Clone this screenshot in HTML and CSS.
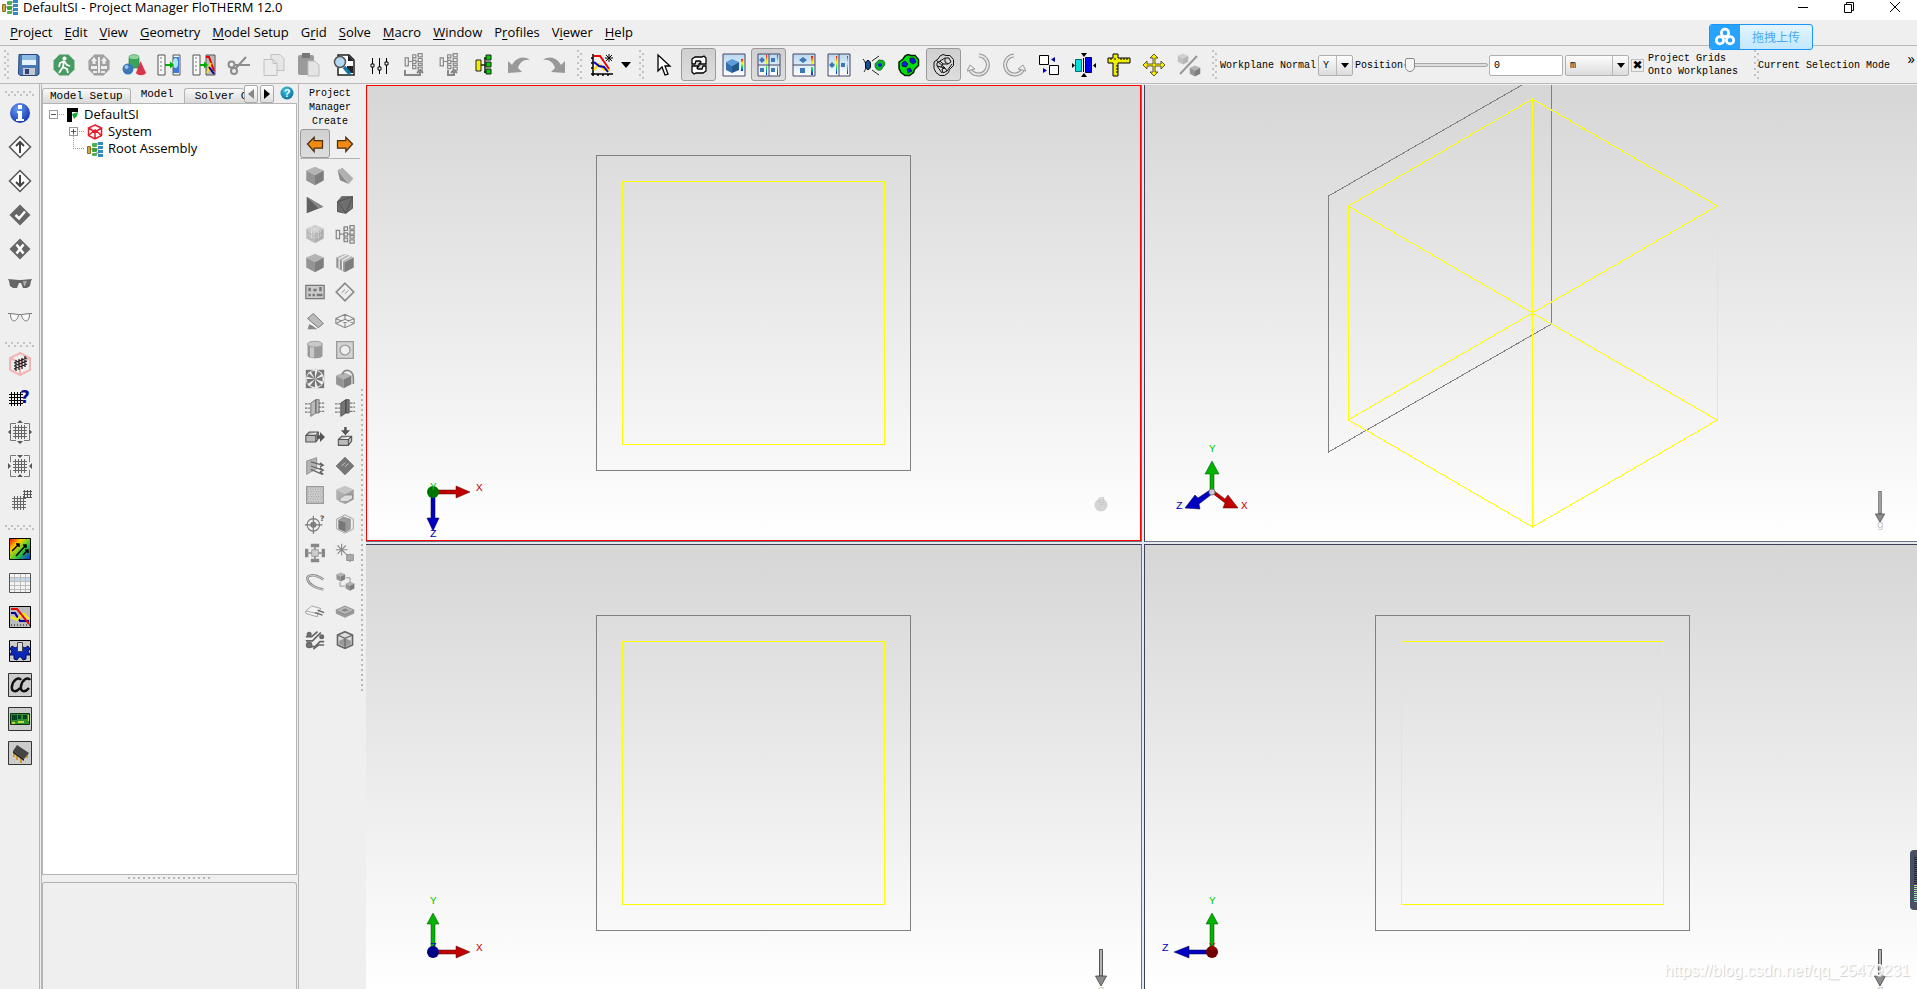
FILE: index.html
```html
<!DOCTYPE html>
<html lang="en">
<head>
<meta charset="utf-8">
<title>DefaultSI - Project Manager FloTHERM 12.0</title>
<link rel="stylesheet" href="styles.css">
</head>
<body>
<svg class="defs" aria-hidden="true">
  <defs>
    <linearGradient id="rain" x1="0" y1="0" x2="0" y2="1"><stop offset="0" stop-color="#f00"/><stop offset=".35" stop-color="#ff0"/><stop offset=".6" stop-color="#2e4"/><stop offset="1" stop-color="#02f"/></linearGradient>
    <linearGradient id="rain2" x1="0" y1="0" x2="1" y2="1"><stop offset="0" stop-color="#f00"/><stop offset=".3" stop-color="#fc0"/><stop offset=".6" stop-color="#3c3"/><stop offset="1" stop-color="#02f"/></linearGradient>
    <linearGradient id="sky" x1="0" y1="0" x2="0" y2="1"><stop offset="0" stop-color="#b8d8ee"/><stop offset="1" stop-color="#fff"/></linearGradient>
    <radialGradient id="ball" cx=".4" cy=".3" r=".8"><stop offset="0" stop-color="#6a9cf4"/><stop offset="1" stop-color="#0a2ca8"/></radialGradient>
    <radialGradient id="teal" cx=".4" cy=".3" r=".8"><stop offset="0" stop-color="#3ec4e4"/><stop offset="1" stop-color="#04688e"/></radialGradient>
    <symbol id="cube" viewBox="0 0 24 24"><path fill="#b4b4b4" d="M12 1l10.500 4.500L12 11 1.500 5.500z"/><path fill="#949494" d="M1.500 5.500L12 11v12L1.500 17.500z"/><path fill="#7e7e7e" d="M22.500 5.500L12 11v12l10.500-5.500z"/></symbol>
    <symbol id="tree" viewBox="0 0 24 24"><g fill="none" stroke="currentColor" stroke-width="1.500"><path d="M6 12h5M13 5h-2v14h2M13 12h4M17 4h2M17 12h2M17 20h2"/><path fill="#eee" d="M1.500 7.500h4v10h-4zM11 3.500h4v4h-4zM11 10.500h4v4h-4zM11 17h4v4h-4zM18 2h5v4h-5zM18 8h5v4h-5zM18 14h5v3h-5zM18 19h5v4h-5z"/></g></symbol>
    <symbol id="ctree" viewBox="0 0 16 16"><path stroke="#777" fill="none" d="M4 8h3M9 3h3M9 12h3M9 8h3"/><path fill="#caa84c" stroke="#8c6c20" d="M.5 5.500h3v7h-3z"/><rect x="5" y="2" width="5" height="4" rx="1" fill="#4db24d"/><rect x="5" y="7" width="5" height="4" rx="1" fill="#3da23d"/><rect x="5" y="12" width="5" height="3" rx="1" fill="#4db24d"/><path fill="#3488c4" d="M11 1h5v3h-5zM11 5h5v3h-5zM11 9h5v3h-5zM11 13h5v3h-5z"/></symbol>
    <symbol id="grid" viewBox="0 0 14 14"><path fill="none" stroke="currentColor" stroke-width="1" d="M2.500 0v14M5.500 0v14M8.500 0v14M11.500 0v14M0 2.500h14M0 5.500h14M0 8.500h14M0 11.500h14"/></symbol>
    <symbol id="dia" viewBox="0 0 24 24"><path d="M12 1.500L22.500 12 12 22.500 1.500 12z"/></symbol>
    <symbol id="mole" viewBox="0 0 24 24"><path d="M8 3l3-1.500 3 1 4 0 3.500 4v6l-4 4-1 3-4 3H8l-4-3-2-4V9l4-3z"/></symbol>
    <symbol id="garrow" viewBox="0 0 12 40"><path stroke="#555" fill="#b4b4b4" d="M4.500 .5h3V27h-3z"/><path fill="#8c8c8c" stroke="#444" stroke-width=".8" d="M.5 27h11L6 37z"/></symbol>
  </defs>
</svg>

<header class="title">
  <svg class="i16"><use href="#ctree"/></svg>
  <h1>DefaultSI - Project Manager FloTHERM 12.0</h1>
  <div class="winbtns">
    <button aria-label="Minimize"><svg viewBox="0 0 12 12"><path stroke="#000" d="M1 6.500h10"/></svg></button>
    <button aria-label="Restore"><svg viewBox="0 0 12 12" fill="none" stroke="#000"><path d="M1.500 3.500h7v8h-7zM3.500 3V1.500h7v8H9"/></svg></button>
    <button aria-label="Close"><svg viewBox="0 0 12 12"><path stroke="#000" d="M1 1l10 10M11 1L1 11"/></svg></button>
  </div>
</header>

<nav class="menu">
  <button><u>P</u>roject</button><button><u>E</u>dit</button><button><u>V</u>iew</button><button><u>G</u>eometry</button><button><u>M</u>odel Setup</button><button>G<u>r</u>id</button><button><u>S</u>olve</button><button><u>M</u>acro</button><button><u>W</u>indow</button><button>P<u>r</u>ofiles</button><button>V<u>i</u>ewer</button><button><u>H</u>elp</button>
  <button class="upload"><span class="logo"><svg viewBox="0 0 24 24" fill="none" stroke="#fff" stroke-width="3"><circle cx="12" cy="7.500" r="4"/><circle cx="6.500" cy="15.500" r="4"/><circle cx="17.500" cy="15.500" r="4"/></svg></span><span class="uptext">拖拽上传</span></button>
</nav>

<div class="toolbar">
  <span class="grip"></span>
  <div class="group">
    <button aria-label="Save"><svg viewBox="0 0 24 24"><path fill="#4a78b4" stroke="#2b4474" d="M2 1.500h18l2 1.500v18l-2 1.500H3L1.500 21z"/><path fill="#e8f2fa" d="M5 2h14v10H5z"/><path fill="#8cbce4" d="M5 2h14v5H5z"/><path fill="#c4c8d0" d="M6 15h12v7H6z"/><path fill="#2b4474" d="M8 16h4v5H8z"/></svg></button>
    <button aria-label="Run"><svg viewBox="0 0 24 24"><path fill="#4a9a64" stroke="#9ccaa8" d="M7.500 1.500h9l6 6v9l-6 6h-9l-6-6v-9z"/><circle cx="12.500" cy="5.500" r="2" fill="#fff"/><path fill="none" stroke="#fff" stroke-width="1.800" d="M12 8l-1 6-4 6M11 14l4 2 1 4M12 8l-4 2-1 4M12 8l3 4 3 1"/></svg></button>
    <button aria-label="Stop"><svg viewBox="0 0 24 24"><path fill="#a0a0a0" stroke="#c4c4c4" d="M7.500 1.500h9l6 6v9l-6 6h-9l-6-6v-9z"/><path fill="#eee" d="M7 4l3 4H8.500v3h-3V8H4zM17 4l3 4h-1.500v3h-3V8H14zM4 13h6v3H4zM14 13h6v3h-6zM11 4h2v16h-2zM6 18h4v2H6zM14 18h4v2h-4z"/></svg></button>
    <button aria-label="Geometry"><svg viewBox="0 0 24 24"><path fill="#3ba45c" stroke="#1f7a3c" stroke-width=".6" d="M7 4c0-3 10-3 10 0v11H7z"/><ellipse cx="12" cy="4" rx="5" ry="2" fill="#8fd4a0"/><circle cx="6" cy="16" r="5.500" fill="#3b78b8"/><circle cx="4.500" cy="14" r="2" fill="#a0c4e8"/><path fill="#d8344c" d="M18.500 8L24 20c-2 3-8 3-10 0z"/></svg></button>
    <button aria-label="Translate"><svg viewBox="0 0 24 24"><path fill="#f8f8f8" stroke="#555" d="M1 2h7v20H1zM16 2h7v20h-7z"/><path stroke="#777" d="M3 5h2M3 9h2M3 13h2M3 17h2"/><path fill="#3c78d8" d="M16 4h6v16h-6z"/><ellipse cx="18.500" cy="10" rx="2.500" ry="5" fill="#a8e8f0"/><path fill="#0a0" d="M8 11h5V8.500l4 3.500-4 3.500V13H8z"/></svg></button>
    <button aria-label="Results"><svg viewBox="0 0 24 24"><path fill="#f8f8f8" stroke="#555" d="M1 2h7v20H1z"/><path fill="#bbb" stroke="#555" d="M14 2h9v20h-9z"/><path stroke="#777" d="M3 5h2M3 9h2M3 13h2M3 17h2"/><path fill="none" stroke="#e00" stroke-width="2" d="M14 4h3l5 14"/><path fill="none" stroke="#fd0" stroke-width="2" d="M15 20l4-10"/><path stroke="#00a" stroke-width="2" d="M17 14l5 7"/><path fill="#0a0" d="M8 11h4V8.500l4 3.500-4 3.500V13H8z"/></svg></button>
    <button aria-label="Cut"><svg viewBox="0 0 24 24" fill="none" stroke="#8c8c8c" stroke-width="2"><path d="M9 15L19 4M8 12h15"/><circle cx="4.500" cy="11.500" r="3"/><circle cx="7" cy="18" r="3"/></svg></button>
    <button aria-label="Copy"><svg viewBox="0 0 24 24" fill="#e6e6e6" stroke="#c0c0c0"><path d="M9 1.500h9l4 4v12H9z"/><path fill="#ececec" d="M2 6.500h9l4 4v12H2z"/><path fill="none" d="M11 6.500v4h4"/></svg></button>
    <button aria-label="Paste"><svg viewBox="0 0 24 24"><rect x="1" y="2" width="16" height="20" rx="2" fill="#9a9a9a"/><path fill="#777" d="M5 0h8v5H5z"/><path fill="#e4e4e4" stroke="#bbb" d="M11 8h7l4 4v11H11z"/></svg></button>
    <button aria-label="Find"><svg viewBox="0 0 24 24"><path fill="#fff" stroke="#222" stroke-width="1.500" d="M6 2h11l5 5v15H6z"/><path fill="#222" d="M16 2l6 6h-6zM15 13h6v7h-6z"/><circle cx="8" cy="9" r="5.500" fill="#b4d8f0" stroke="#555" stroke-width="1.500"/><path stroke="#17a" stroke-width="3.500" d="M12 14l6 7"/></svg></button>
    <button aria-label="Settings"><svg viewBox="0 0 24 24" stroke="#000" fill="#fff"><path d="M5.500 5v16M12.500 5v16M19.500 5v16"/><path d="M4 11h3v3H4zM11 14h3v3h-3zM18 9h3v3h-3z"/></svg></button>
    <button aria-label="Promote"><svg viewBox="0 0 24 24" class="grey"><use href="#tree" x="1" y="-1" width="21" height="19"/><path fill="none" stroke="#888" stroke-width="2" d="M3 17v5h15v-4M15 20l3-3 3 3"/></svg></button>
    <button aria-label="Demote"><svg viewBox="0 0 24 24" class="grey"><use href="#tree" x="1" y="-1" width="21" height="19"/><path fill="none" stroke="#888" stroke-width="2" d="M11 17v5h6v-4M14 20l3-3 3 3"/></svg></button>
    <button aria-label="Expand"><svg viewBox="0 0 24 24" stroke="#222"><path d="M9 12h4M13 5v15M12 5h4M12 12h4M12 19h4" stroke-width="1.500"/><path fill="#ee0" d="M4 7h5v11H4z"/><path fill="#0c0" d="M14 2h5v5h-5zM14 9h5v5h-5zM14 16h5v5h-5z"/></svg></button>
    <button aria-label="Undo"><svg viewBox="0 0 24 24" fill="#999"><path d="M1 20V8l4 4C9 5 16 2 23 7c-6-1-10 2-12 8l4 4z"/></svg></button>
    <button aria-label="Redo"><svg viewBox="0 0 24 24" fill="#999"><path d="M23 20V8l-4 4C15 5 8 2 1 7c6-1 10 2 12 8l-4 4z"/></svg></button>
  </div>
  <span class="grip"></span>
  <div class="group">
    <button class="chart" aria-label="Chart"><svg viewBox="0 0 24 24" fill="none" stroke-width="2"><path stroke="#000" stroke-width="1.500" d="M3 1v22M1 21h22M1 5h2M1 10h2M1 15h2M8 21v2M13 21v2M18 21v2"/><path stroke="#e00" d="M4 3h6l5 7 4 6"/><path stroke="#fd0" d="M4 17l5-6 5 6h6"/><path stroke="#00a" d="M4 9l5 4 5 1 4 5"/><path stroke="#000" stroke-width="1" d="M19 1v8M15 5h8M16 2l6 6M22 2l-6 6"/></svg></button>
    <button class="narrow" aria-label="Chart options"><svg viewBox="0 0 10 6"><path d="M0 0h10L5 6z"/></svg></button>
  </div>
  <span class="grip"></span>
  <div class="group">
    <button aria-label="Select"><svg viewBox="0 0 24 24"><path fill="#fff" stroke="#000" stroke-width="1.300" d="M6 2v16l4-4 3 8 3-1-3-8h5z"/></svg></button>
    <button class="on" aria-label="Refresh"><svg viewBox="0 0 24 24" fill="#fff" stroke="#000" stroke-width="1.300"><path d="M5 11V6l3-2h7l2-1 2 2v6h-7l2-2-1-1H9l-1 3zM19 13v5l-3 2H9l-2 1-2-2v-6h7l-2 2 1 1h4l1-3z"/></svg></button>
    <button aria-label="Solid view"><svg viewBox="0 0 24 24"><path fill="url(#sky)" stroke="#446" d="M1 1h22v22H1z"/><path fill="#5c9cd8" d="M10 6l7 3-7 4-6-4z"/><path fill="#3470b0" d="M4 9l6 4v7l-6-3z"/><path fill="#22588c" d="M17 9l-7 4v7l7-3z"/><path fill="url(#rain)" d="M19 6h2v12h-2z"/></svg></button>
    <button class="on" aria-label="Four views"><svg viewBox="0 0 24 24"><path fill="url(#sky)" stroke="#446" d="M1 1h22v22H1zM12 1v22M1 12h22"/><path fill="#3c78b8" d="M2 7l3-3 3 3-3 3zM14 5h4v4h-4zM3 15h4v4H3zM14 15h4v4h-4z"/><path fill="url(#rain)" d="M9 2h1v9H9zM20 2h1v9h-1zM9 13h1v9H9zM20 13h1v9h-1z"/></svg></button>
    <button aria-label="Horizontal split"><svg viewBox="0 0 24 24"><path fill="url(#sky)" stroke="#446" d="M1 1h22v22H1zM1 12h22"/><path fill="#3c78b8" d="M7 7l4-3 4 3-4 3zM8 15h5v5H8z"/><path fill="url(#rain)" d="M19 3h2v8h-2zM19 14h2v8h-2z"/></svg></button>
    <button aria-label="Vertical split"><svg viewBox="0 0 24 24"><path fill="url(#sky)" stroke="#446" d="M1 1h22v22H1zM12 1v22"/><path fill="#3c78b8" d="M2 12l3-3 3 3-3 3zM14 10h4v4h-4z"/><path fill="url(#rain)" d="M9 3h1v18H9zM20 3h1v18h-1z"/></svg></button>
    <button aria-label="Look at"><svg viewBox="0 0 24 24"><path fill="none" stroke="#222" d="M1 6c3 3 4 9 1 13M10 8l7-5M10 17l7 5"/><ellipse cx="6" cy="12" rx="2.500" ry="4.500" fill="#15519c" stroke="#000"/><use href="#mole" x="12" y="6" width="12" height="12" fill="#0b2" stroke="#020" stroke-width="1"/><circle cx="18" cy="12" r="2" fill="#02d"/></svg></button>
    <button aria-label="Solid"><svg viewBox="0 0 24 24"><use href="#mole" width="24" height="24" fill="#0d1" stroke="#020" stroke-width="1.500"/><path fill="#02d" stroke="#003" stroke-width=".7" d="M5 10l3-2 3 3-2 3-4-1zM13 5l4 0 2 4-3 2-3-2zM10 16l3-1 2 3-4 2z"/></svg></button>
    <button class="on" aria-label="Wireframe"><svg viewBox="0 0 24 24" fill="none" stroke="#111"><use href="#mole" width="24" height="24"/><path d="M5 10l3-2 3 3-2 3-4-1zM13 5l4 0 2 4-3 2-3-2zM10 16l3-1 2 3-4 2zM8 8l5-3M11 11l5 0M9 14l4 1M15 18l5-7M5 13l5 7M4 7l9 8"/></svg></button>
    <button aria-label="Rotate left"><svg viewBox="0 0 24 24" fill="none"><path stroke="#999" stroke-width="4" d="M12 2.500a9.500 9.500 0 1 1-9 14"/><path stroke="#e8e8e8" stroke-width="1.800" d="M12 2.500a9.500 9.500 0 1 1-9 14"/><path fill="#eee" stroke="#999" d="M0 18l3-6 5 4z"/></svg></button>
    <button aria-label="Rotate right"><svg viewBox="0 0 24 24" fill="none"><path stroke="#999" stroke-width="4" d="M12 2.500a9.500 9.500 0 1 0 9 14"/><path stroke="#e8e8e8" stroke-width="1.800" d="M12 2.500a9.500 9.500 0 1 0 9 14"/><path fill="#eee" stroke="#999" d="M24 18l-3-6-5 4z"/></svg></button>
    <button aria-label="Swap"><svg viewBox="0 0 24 24"><path fill="#fff" stroke="#000" d="M2.500 2.500h9v9h-9zM12.500 12.500h9v9h-9z"/><path fill="#00a" d="M18 4v5l-4-2.500zM6 15v5l4-2.500z"/></svg></button>
    <button aria-label="Align"><svg viewBox="0 0 24 24"><path fill="#0dd" stroke="#066" d="M3.500 6.500h6v12h-6z"/><path fill="#00e" stroke="#006" d="M13.500 4.500h6v15h-6z"/><path d="M9 0h6l-3 4zM9 24h6l-3-4zM0 10v5l3-2.500zM24 10v5l-3-2.500zM11 5h1v14h-1z"/></svg></button>
    <button aria-label="Measure"><svg viewBox="0 0 24 24" fill="#ee0" stroke="#000"><path d="M6 1h5v4h12v5H11v13H6V10H1V5h5z"/><path d="M4 5v2M14 5v2M17 5v2M20 5v2M9 13h2M9 16h2M9 19h2M8 5v2"/></svg></button>
    <button aria-label="Pan"><svg viewBox="0 0 24 24" fill="#fe0" stroke="#332" stroke-width=".8"><path d="M12 1l4 4h-3v6h6V8l4 4-4 4v-3h-6v6h3l-4 4-4-4h3v-6H5v3l-4-4 4-4v3h6V5H8z"/></svg></button>
    <button aria-label="Toggle shading"><svg viewBox="0 0 24 24"><g opacity=".5"><use href="#cube" x="0" y="0" width="12" height="12"/></g><use href="#cube" x="12" y="12" width="12" height="12"/><path stroke="#999" stroke-width="2" d="M20 3L3 21"/></svg></button>
  </div>
  <span class="grip last"></span>
  <div class="fields">
    <label for="normal">Workplane Normal</label>
    <span class="combo small"><select id="normal"><option>Y</option></select></span>
    <label for="pos">Position</label>
    <input type="range" id="pos" min="0" max="100" value="0">
    <input type="text" class="num" value="0" aria-label="Position value">
    <span class="combo"><select aria-label="Unit"><option>m</option></select></span>
    <label class="check"><input type="checkbox" checked><span>Project Grids<br>Onto Workplanes</span></label>
  </div>
  <span class="grip"></span>
  <span class="mono">Current Selection Mode</span>
  <button class="more" aria-label="More tools">»</button>
</div>

<main>
  <aside class="strip">
    <span class="hgrip"></span>
    <div class="stack">
      <button aria-label="Info"><svg viewBox="0 0 24 24"><circle cx="12" cy="12" r="10" fill="url(#ball)"/><path fill="#fff" d="M10 4h4v4h-4zM9 10h5v8h2v2H8v-2h2v-6H9z"/></svg></button>
      <button aria-label="Move up"><svg viewBox="0 0 24 24"><use href="#dia" width="24" height="24" fill="#fff" stroke="#555" stroke-width="1.500"/><path fill="none" stroke="#444" stroke-width="2" d="M12 18V8M8 11l4-4 4 4"/></svg></button>
      <button aria-label="Move down"><svg viewBox="0 0 24 24"><use href="#dia" width="24" height="24" fill="#fff" stroke="#555" stroke-width="1.500"/><path fill="none" stroke="#444" stroke-width="2" d="M12 6v10M8 13l4 4 4-4"/></svg></button>
      <button aria-label="Activate"><svg viewBox="0 0 24 24"><use href="#dia" width="24" height="24" fill="#666"/><path fill="none" stroke="#fff" stroke-width="2.500" d="M7.500 12l3.500 3.500 6-7"/></svg></button>
      <button aria-label="Deactivate"><svg viewBox="0 0 24 24"><use href="#dia" width="24" height="24" fill="#666"/><path stroke="#fff" stroke-width="2.500" d="M8.500 7.500l7 9M15.500 7.500l-7 9"/></svg></button>
      <button aria-label="Hide"><svg viewBox="0 0 24 24"><path fill="#666" d="M0 8l11 1h2l11-1-1 2-1 5-3 2h-4l-2-5h-2l-2 5H5l-3-2-1-5z"/><path fill="#aaa" d="M15 10l4 0-2 5-1 0z"/></svg></button>
      <button aria-label="Show"><svg viewBox="0 0 24 24" fill="#f8f8f8" stroke="#777"><path d="M0 8.500h2.500l8 1h3l8-1H24M2.500 9c0 10 7 8 8 1M21.500 9c0 10-7 8-8 1"/></svg></button>
    </div>
    <span class="hgrip"></span>
    <div class="stack">
      <button aria-label="System grid"><svg viewBox="0 0 24 24"><path fill="none" stroke="#f4b4b4" stroke-width="2" d="M12 1l10 5v12l-10 5-10-5V6zM2 6l10 5 10-5M12 11v12"/><path stroke="#222" stroke-width="1.300" d="M8 8v11M11 7v11M14 6v11M17 4v11M6 11l13-5M6 14l13-5M6 17l13-5"/></svg></button>
      <button aria-label="Grid query"><svg viewBox="0 0 24 24"><use href="#grid" x="1" y="6" width="14" height="14"/><text x="12" y="17" class="qmark">?</text></svg></button>
      <button aria-label="Grow grid"><svg viewBox="0 0 24 24" class="dark"><use href="#grid" x="5" y="5" width="14" height="14"/><path fill="none" stroke="#777" d="M2.500 9V3.500H8M16 3.500h5.500V9M21.500 15v5.500H16M8 20.500H2.500V15"/><path fill="#555" d="M9 3l3-3 3 3zM9 21l3 3 3-3zM3 9l-3 3 3 3zM21 9l3 3-3 3z"/></svg></button>
      <button aria-label="Shrink grid"><svg viewBox="0 0 24 24" class="dark"><use href="#grid" x="5" y="5" width="14" height="14"/><path fill="none" stroke="#777" d="M2.500 8V1.500H8M16 1.500h5.500V8M21.500 16v6.500H16M8 22.500H2.500V16"/><path fill="#555" d="M9 1l3 3 3-3zM9 23l3-3 3 3zM0 9l3 3-3 3zM24 9l-3 3 3 3z"/></svg></button>
      <button aria-label="Local grid"><svg viewBox="0 0 24 24" class="dark"><use href="#grid" x="4" y="8" width="14" height="14"/><path stroke="#555" d="M16.500 2v8M19.500 2v8M22.500 2v8M15 3.500h9M15 6.500h9M15 9.500h9"/></svg></button>
    </div>
    <span class="hgrip"></span>
    <div class="stack tail">
      <button aria-label="Vectors"><svg viewBox="0 0 24 24"><path fill="url(#rain2)" stroke="#000" d="M1.500 1.500h21v21h-21z"/><path fill="none" stroke="#000" stroke-width="1.500" d="M4 14l7-7M8 7h3v3M8 19l10-11M15 8h3v3M15 18l5-5M17 13h3v3"/></svg></button>
      <button aria-label="Tables"><svg viewBox="0 0 24 24"><path fill="#f4f4f4" stroke="#555" d="M1.500 2.500h21v19h-21z"/><path fill="#c4d8ec" d="M2 6h20v5H2z"/><path stroke="#bbb" d="M2 6.500h20M2 10.500h20M2 14.500h20M2 18.500h20M6.500 3v18M12.500 3v18M17.500 3v18"/></svg></button>
      <button aria-label="Profiles"><svg viewBox="0 0 24 24"><path fill="#bbb" stroke="#000" d="M1.500 1.500h21v21h-21z"/><g fill="none" stroke-width="2"><path stroke="#009" d="M3 8h4l5 8h9"/><path stroke="#fe0" d="M3 12l6 3 5-6h2l5 5"/><path stroke="#e00" d="M3 4h6l12 15"/></g><path stroke="#000" stroke-dasharray="1 2" d="M3 20h19"/></svg></button>
      <button aria-label="Solver settings"><svg viewBox="0 0 24 24"><path fill="#ccc" stroke="#000" d="M1.500 1.500h21v21h-21z"/><path fill="#0a28b8" stroke="#001060" d="M2 10l2-3 3 2 2-1h6l2 1 3-2 2 3-2 2 2 4-4 0 0 4-3 1-2-3h-2l-2 3-3-1 0-4-4 0 2-4z"/><path fill="#ddd" stroke="#444" d="M9.500 3.500h5v9h-5z"/></svg></button>
      <button aria-label="Command center"><svg viewBox="0 0 24 24"><path fill="#ccc" stroke="#333" d="M.5 .5h23v23H.5z"/><path fill="none" stroke="#111" stroke-width="2.500" d="M13 7c-2-4-8 0-9 6-1 6 4 7 8 2M22 7c-2-4-8 0-9 6-1 6 4 7 8 2"/></svg></button>
      <button aria-label="Board"><svg viewBox="0 0 24 24"><path fill="#ccc" stroke="#333" d="M.5 .5h23v23H.5z"/><path fill="#2f8f2f" stroke="#131" d="M2.500 6.500h19v11h-19z"/><path fill="#042" d="M4 8h5v5H4zM10 8h3v4h-3zM15 8h4v4h-4z"/><path fill="#bd4" d="M4 15h3v2H4zM10 14h6v2h-6zM20 8h1v6h-1z"/></svg></button>
      <button aria-label="Package"><svg viewBox="0 0 24 24"><path fill="#ccc" stroke="#333" d="M.5 .5h23v23H.5z"/><path stroke="#c93" stroke-width="2" d="M6 11v5M9 14v5M13 17v5M19 12v5"/><path fill="#444" d="M9 4l12 8-5 6L5 10z"/><path fill="#222" d="M5 10l11 8v2L5 12z"/></svg></button>
    </div>
  </aside>

  <section class="side">
    <div class="tabs">
      <button>Model Setup</button><button class="sel">Model</button><button class="cut">Solver Control</button>
      <span class="arrows"><button aria-label="Previous tab" disabled><svg viewBox="0 0 6 10"><path fill="#888" d="M6 0v10L0 5z"/></svg></button><button aria-label="Next tab"><svg viewBox="0 0 6 10"><path d="M0 0v10l6-5z"/></svg></button></span>
      <button class="help" aria-label="Help"><svg viewBox="0 0 14 14"><circle cx="7" cy="7" r="6.500" fill="url(#teal)"/><text x="7" y="11" text-anchor="middle" class="q">?</text></svg></button>
    </div>
    <div class="tree">
      <ul>
        <li><div class="row"><button class="tog minus" aria-label="Collapse"></button><span class="dots"></span><svg class="i16" viewBox="0 0 16 16"><path d="M1 1h11v4H6v10H1z"/><path fill="#1a3" d="M6 7l6-2-1 4-3 3z"/></svg>DefaultSI</div>
          <ul>
            <li><div class="row"><button class="tog" aria-label="Expand"></button><span class="dots"></span><svg class="i16" viewBox="0 0 16 16" fill="none" stroke="#e21d2c" stroke-width="1.500"><path d="M8 1l6.500 3v7.500L8 15l-6.500-3.500V4zM1.500 4L8 8l6.500-4M8 8v7M1.500 11.500L8 6l6.500 5.500"/></svg>System</div></li>
            <li><div class="row leaf"><span class="elbow"></span><svg class="i16"><use href="#ctree"/></svg>Root Assembly</div></li>
          </ul>
        </li>
      </ul>
    </div>
    <div class="split"><span></span></div>
    <div class="lower"></div>
  </section>

  <section class="create">
    <div class="palette">
      <h2>Project Manager Create</h2>
      <div class="pair arrowsrow">
        <button class="on" aria-label="Back"><svg viewBox="0 0 24 24"><path fill="#f28a14" stroke="#4a3010" stroke-width="1.500" d="M3 12l8-8v4h10v9H11v4z"/></svg></button>
        <button aria-label="Forward"><svg viewBox="0 0 24 24"><path fill="#f28a14" stroke="#4a3010" stroke-width="1.500" d="M21 12l-8-8v4H3v9h10v4z"/></svg></button>
      </div>
      <div class="pair">
        <button aria-label="Cuboid"><svg viewBox="0 0 24 24"><use href="#cube"/></svg></button>
        <button aria-label="Prism"><svg viewBox="0 0 24 24"><path fill="#b0b0b0" d="M3 5l6-3 13 13-5 6z"/><path fill="#8a8a8a" d="M3 5l14 17-11-5z"/></svg></button>
        <button aria-label="Tet"><svg viewBox="0 0 24 24"><path fill="#606060" d="M2 2l20 12-20 8z"/><path fill="#888" d="M2 2l20 12-6 2z"/></svg></button>
        <button aria-label="Inverted tet"><svg viewBox="0 0 24 24"><path fill="#6e6e6e" stroke="#4c4c4c" d="M8 2h13v14l-8 6-10-2V8z"/><path fill="none" stroke="#4c4c4c" d="M3 8l10 14L21 2 3 8"/></svg></button>
        <button aria-label="Resistance"><svg viewBox="0 0 24 24"><g opacity=".55"><use href="#cube" width="24" height="24"/></g><path fill="none" stroke="#fff" stroke-dasharray="1 2" d="M5 9l7 4 7-4M5 13l7 4 7-4M7 4l10 5M16 4L7 9M8 10v9M16 10v9"/></svg></button>
        <button aria-label="Assembly"><svg viewBox="0 0 24 24" class="grey"><use href="#tree"/></svg></button>
        <button aria-label="Block"><svg viewBox="0 0 24 24"><use href="#cube"/></svg></button>
        <button aria-label="Fins"><svg viewBox="0 0 24 24"><use href="#cube" width="24" height="24"/><path stroke="#eee" stroke-width="1.500" fill="none" d="M14 2L5 7v12M18 4l-9 5v12"/></svg></button>
        <button aria-label="PCB"><svg viewBox="0 0 24 24"><path fill="#ccc" stroke="#777" stroke-width="1.500" d="M1 4h22v16H1z"/><path fill="#777" d="M4 7h3v4H4zM10 8h4v3h-4zM17 6h3v5h-3zM4 14h3v3H4zM9 14h3v3H9zM14 14h7v3h-7z"/></svg></button>
        <button aria-label="Monitor"><svg viewBox="0 0 24 24"><use href="#dia" width="24" height="24" fill="#eee" stroke="#888" stroke-width="2"/><path stroke="#777" d="M8 13l4-4M12 14l4-4"/></svg></button>
        <button aria-label="Plate"><svg viewBox="0 0 24 24"><path fill="#bbb" stroke="#666" d="M3 9l7-6 12 12-6 5z"/><path fill="#888" d="M5 16l3 1 7 5H3z"/></svg></button>
        <button aria-label="Enclosure"><svg viewBox="0 0 24 24" fill="none" stroke="#888" stroke-width="1.300"><path d="M1 9l11-5 11 5v6l-11 5-11-5zM1 9l11 5 11-5M12 14v6M12 4v6M1 15l11-5 11 5"/></svg></button>
        <button aria-label="Cylinder"><svg viewBox="0 0 24 24"><path fill="#999" d="M3 5v14c0 4 18 4 18 0V5z"/><path fill="#c8c8c8" d="M6 7h5v14H6z"/><ellipse cx="12" cy="5" rx="9" ry="3.500" fill="#c8c8c8" stroke="#999"/></svg></button>
        <button aria-label="Hole"><svg viewBox="0 0 24 24" fill="#d4d4d4" stroke="#999" stroke-width="1.500"><path d="M2 2h20v20H2z"/><circle cx="12" cy="12" r="6" fill="#eee"/></svg></button>
        <button aria-label="Fan"><svg viewBox="0 0 24 24"><path fill="#777" d="M1 1h22v22H1z"/><circle cx="12" cy="12" r="11" fill="#eee"/><path fill="#777" d="M12 12L7 3l5-1zM12 12l3-10 5 4zM12 12l9-3 0 6zM12 12l8 7-5 2zM12 12l0 10-6-2zM12 12l-9 6-1-6zM12 12L2 9l3-4z"/></svg></button>
        <button aria-label="Recirculation"><svg viewBox="0 0 24 24"><use href="#cube" x="0" y="3" width="21" height="21"/><path fill="none" stroke="#888" stroke-width="2" d="M9 7c0-8 14-8 13 6v5"/></svg></button>
        <button aria-label="Heat sink"><svg viewBox="0 0 24 24"><path fill="#bbb" stroke="#666" d="M7 6l6-4v16l-6 4zM13 2h4v16h-4z"/><path stroke="#777" stroke-width="1.500" stroke-dasharray="3 1" d="M0 7h6M0 12h6M0 17h6M16 6h8M16 11h8M16 16h8"/></svg></button>
        <button aria-label="Heat exchanger"><svg viewBox="0 0 24 24"><path fill="#777" stroke="#444" d="M7 6l6-4v16l-6 4zM13 2h4v16h-4z"/><path stroke="#777" stroke-width="1.500" stroke-dasharray="3 1" d="M0 7h6M0 12h6M0 17h6M18 6h6M18 11h6M18 16h6"/></svg></button>
        <button aria-label="Flow source"><svg viewBox="0 0 24 24"><path fill="#bbb" stroke="#555" stroke-width="1.300" d="M1 10l4-4h11v8l-3 4H1zM1 10h12l3-4M13 10v8"/><path fill="#555" d="M14 10h4V6l6 6-6 6v-4h-4z"/></svg></button>
        <button aria-label="Source"><svg viewBox="0 0 24 24"><path fill="#bbb" stroke="#555" stroke-width="1.300" d="M4 15l4-4h12v6l-4 5H4zM4 15h12l4-4M16 15v7"/><path fill="#555" d="M11 0h3v4h4l-5.500 6L7 4h4z"/></svg></button>
        <button aria-label="Fixed flow"><svg viewBox="0 0 24 24"><path fill="#b4b4b4" stroke="#888" d="M2 6l12-4v13L2 22z"/><path fill="none" stroke="#666" stroke-width="1.500" d="M7 7l14 4M7 12l14 5M7 16l14 6M18 8l4 3-4 2M18 14l4 3-4 2M18 19l4 3"/></svg></button>
        <button aria-label="Thermal"><svg viewBox="0 0 24 24"><use href="#dia" width="24" height="24" fill="#777" stroke="#666"/><path stroke="#ddd" d="M8 12l4-4M12 13l4-4"/></svg></button>
        <button aria-label="Perforated plate"><svg viewBox="0 0 24 24"><path fill="#ccc" stroke="#999" stroke-width="1.500" d="M2 2h20v20H2z"/><path stroke="#888" stroke-dasharray="1 2" d="M3 5h18M4 8h18M3 11h18M4 14h18M3 17h18M4 20h18"/></svg></button>
        <button aria-label="Region"><svg viewBox="0 0 24 24"><g opacity=".7"><use href="#cube" width="24" height="24"/></g><path fill="#ddd" stroke="#888" d="M6 16l6-4h9v4l-6 4-9 0z"/></svg></button>
        <button aria-label="Monitor point"><svg viewBox="0 0 24 24" fill="none" stroke="#777" stroke-width="1.300"><circle cx="10" cy="13" r="7.500"/><circle cx="10" cy="13" r="3" fill="#999"/><path d="M10 2v22M0 13h21"/><text x="18" y="8" class="tinyq">?</text></svg></button>
        <button aria-label="Volume region"><svg viewBox="0 0 24 24"><path fill="none" stroke="#999" d="M12 1l10 5v12l-10 5-10-5V6z"/><path fill="#777" d="M4 7l9 3v12l-9-4z"/><path fill="#999" d="M13 10l6-4v12l-6 4zM4 7l6-4 9 3-6 4z"/></svg></button>
        <button aria-label="Network assembly"><svg viewBox="0 0 24 24" fill="#888"><path d="M7 1h10v4H7zM7 19h10v4H7zM0 7h4v10H0zM20 7h4v10h-4z"/><path fill="#ccc" stroke="#999" d="M8 8h8v8H8z"/><path d="M11 5h2v3h-2zM11 16h2v3h-2zM4 11h4v2H4zM16 11h4v2h-4z"/></svg></button>
        <button aria-label="Network node"><svg viewBox="0 0 24 24"><path stroke="#888" stroke-width="1.300" d="M8 1v14M1 8h14M3 3l10 10M13 3L3 13M13 13l6 4M18 13v10"/><path fill="#aaa" stroke="#888" d="M14 14h8v7h-8z"/></svg></button>
        <button aria-label="Heat pipe"><svg viewBox="0 0 24 24" fill="none"><path stroke="#888" stroke-width="3" d="M22 9C10 1 1 4 3 9c2 6 10 11 19 12"/><path stroke="#ddd" d="M22 9C10 1 1 4 3 9c2 6 10 11 19 12"/></svg></button>
        <button aria-label="Linked parts"><svg viewBox="0 0 24 24"><use href="#cube" x="1" y="0" width="12" height="12"/><use href="#cube" x="12" y="11" width="12" height="12"/><path fill="none" stroke="#888" d="M6 12v5h6M13 7h5v5"/></svg></button>
        <button aria-label="Controller"><svg viewBox="0 0 24 24"><path fill="#f4f4f4" stroke="#999" d="M1 12l7-6 11 3-4 6zM1 12v3l14 4v-4"/><path fill="none" stroke="#666" stroke-width="1.500" d="M12 14l9 3M15 11l8 3"/></svg></button>
        <button aria-label="Die"><svg viewBox="0 0 24 24"><path fill="#999" d="M1 11l11-5 11 5v4l-11 5-11-5z"/><path fill="#bbb" stroke="#888" d="M1 11l11-5 11 5-11 5z"/><path fill="#888" d="M7 11l5-2 5 2-5 2z"/></svg></button>
        <button aria-label="Cooler"><svg viewBox="0 0 24 24" fill="none" stroke="#666" stroke-width="2"><path d="M1 8h7l7-6M1 13h8L19 3M4 20h8l6-6h5M10 23l6-5h7"/><g fill="#777"><circle cx="5" cy="5" r="2"/><circle cx="20" cy="8" r="2"/><circle cx="5" cy="18" r="3"/></g></svg></button>
        <button aria-label="Rack"><svg viewBox="0 0 24 24"><path fill="#ddd" stroke="#666" stroke-width="2" d="M12 2l9 4v12l-9 4-9-4V6z"/><path fill="#999" d="M5 13l7-3 7 3v4l-7 3-7-3z"/><path fill="none" stroke="#666" stroke-width="1.500" d="M3 6l9 4 9-4M12 10v12"/></svg></button>
      </div>
    </div>
    <span class="vgrip"></span>
  </section>

  <section class="views">
    <div class="view left top active"><svg viewBox="367 86 773 454" preserveAspectRatio="xMidYMid slice">
      <path class="bound" d="M596.500 155.500h314v315h-314z"/><path class="yel" d="M622.500 181.500h262v263h-262z"/>
      <path class="r" d="M436 490h20v-4l14 6-14 6v-4h-20z"/><path class="b" d="M431 492h4v26h4l-6 13-6-13h4z"/><circle cx="433" cy="492" r="6" class="g2"/>
      <text x="430" y="490" class="gt">Y</text><text x="476" y="491" class="rt">X</text><text x="430" y="537" class="bt">Z</text>
      <circle cx="1101" cy="505" r="6.500" fill="#d4d4d4"/><text x="1098" y="503" class="ft">g</text>
    </svg></div>
    <div class="view right top"><svg viewBox="1145 85 772 456" preserveAspectRatio="xMidYMid slice">
      <path class="bound" d="M1328.500 196L1551.500 68V324L1328.500 452z"/>
      <path class="yel" d="M1532.500 99L1717.500 206V420L1532.500 527 1348.500 420V206zM1348 206L1717 420M1717 206L1348 420M1532.500 99V527"/>
      <path class="r" d="M1213 490l12 9 3-4 10 13-15 0 2-5-13-10z"/><path class="b" d="M1210 490l-12 8-3-3-10 13 15 1-1-5 13-10z"/><path class="g" d="M1210 492v-18h-5l7-13 7 13h-5v18z"/><circle cx="1212" cy="492" r="3" fill="#ccc" stroke="#777"/>
      <text x="1209" y="452" class="gt">Y</text><text x="1241" y="509" class="rt">X</text><text x="1176" y="509" class="bt">Z</text>
      <use href="#garrow" x="1874" y="491" width="12" height="34"/><text x="1877" y="528" class="ft">g</text>
    </svg></div>
    <div class="view left bottom"><svg viewBox="366 545 775 444" preserveAspectRatio="xMidYMin slice">
      <path class="bound" d="M596.500 615.500h314v315h-314z"/><path class="yel" d="M622.500 641.500h262v263h-262z"/>
      <path class="g" d="M431 952v-28h-4l6-11 6 11h-4v28z"/><path class="r" d="M436 950h20v-4l14 6-14 6v-4h-20z"/><circle cx="433" cy="952" r="6" class="b2"/>
      <text x="430" y="904" class="gt">Y</text><text x="476" y="951" class="rt">X</text><text x="430" y="950" class="bt">Z</text>
      <use href="#garrow" x="1095" y="949" width="12" height="40"/><text x="1098" y="993" class="ft">g</text>
    </svg></div>
    <div class="view right bottom"><svg viewBox="1145 545 772 444" preserveAspectRatio="xMidYMin slice">
      <path class="bound" d="M1375.500 615.500h314v315h-314z"/><path class="yel" d="M1401.500 641.500h262v263h-262z"/>
      <path class="g" d="M1210 952v-28h-4l6-11 6 11h-4v28z"/><path class="b" d="M1209 950h-20v-4l-15 6 15 6v-4h20z"/><circle cx="1212" cy="952" r="6" class="r2"/>
      <text x="1209" y="904" class="gt">Y</text><text x="1209" y="950" class="rt">X</text><text x="1162" y="951" class="bt">Z</text>
      <use href="#garrow" x="1874" y="949" width="12" height="40"/><text x="1877" y="993" class="ft">g</text>
    </svg></div>
    <div class="gauge"><span></span></div>
    <p class="mark">https://blog.csdn.net/qq_25479231</p>
  </section>
</main>
</body>
</html>
```
FILE: styles.css
```css
* { box-sizing: border-box; }

body {
  margin: 0;
  height: 100vh;
  display: flex;
  flex-direction: column;
  overflow: hidden;
  background: #efefef;
  color: #000;
  font: 13px/17px "Open Sans", "Noto Sans", "Noto Sans CJK SC", sans-serif;
}

button {
  margin: 0;
  padding: 0;
  border: 0;
  background: none;
  color: inherit;
  font: inherit;
  display: flex;
  align-items: center;
  justify-content: center;
}

svg { display: block; flex: none; }
.defs { position: absolute; width: 0; height: 0; }
.i16 { width: 16px; height: 16px; }

/* title bar */
.title {
  flex: none;
  height: 20px;
  display: flex;
  align-items: center;
  gap: 5px;
  padding: 0 16px 6px 2px;
  background: #fff;
}
.title h1 { margin: 0; font-size: 13px; font-weight: 400; flex: 1; }
.winbtns { display: flex; gap: 34px; }
.winbtns svg { width: 12px; height: 12px; }

/* menu bar */
.menu {
  flex: none;
  height: 26px;
  display: flex;
  align-items: center;
  gap: 12px;
  padding: 0 104px 0 10px;
  border-bottom: 1px solid #b9b9b9;
}
.menu u { text-underline-offset: 2px; }
.menu .upload {
  position: relative;
  z-index: 2;
  margin: 8px 0 0 auto;
  width: 104px;
  height: 26px;
  border: 1px solid #1b96ff;
  border-radius: 3px;
  background: linear-gradient(#e4f5ff, #c2e8fd);
  align-items: stretch;
  justify-content: flex-start;
  overflow: hidden;
}
.logo { width: 30px; background: #28a2ff; display: flex; align-items: center; justify-content: center; }
.logo svg { width: 22px; height: 22px; }
.uptext { flex: 1; color: #48aaf6; font: 12px/24px "Noto Sans CJK SC", sans-serif; }

/* toolbar */
.toolbar {
  flex: none;
  height: 38px;
  display: flex;
  align-items: center;
  padding-left: 4px;
  border-bottom: 1px solid #b9b9b9;
}
.grip, .vgrip {
  flex: none;
  width: 6px;
  height: 30px;
  margin-right: 1px;
  background:
    radial-gradient(circle at 1px 1px, #c2c2c2 1px, transparent 1px) 0 0 / 8px 6px,
    radial-gradient(circle at 1px 1px, #c2c2c2 1px, transparent 1px) 3px 3px / 8px 6px;
}
.group { display: flex; }
.group + .grip { margin-left: 6px; }
.group button { width: 35px; height: 33px; }
.group svg { width: 24px; height: 24px; }
.group .narrow { width: 14px; }
.group .narrow svg { width: 10px; height: 6px; }
.on {
  border: 1px solid #9a9a9a;
  border-radius: 3px;
  background: linear-gradient(#cfcfcf, #dedede);
}
.grey { color: #888; }
.dark { color: #666; }

.fields, .mono, .tabs, .create h2 { font: 10px/13px "Liberation Mono", monospace; }
.fields { display: flex; align-items: center; gap: 2px; white-space: nowrap; padding-top: 1px; }
.mono { padding-top: 2px; }
.combo { position: relative; width: 64px; height: 21px; }
.combo.small { width: 35px; }
.combo select {
  appearance: none;
  width: 100%;
  height: 100%;
  padding: 0 4px;
  border: 1px solid #b0b0b0;
  border-radius: 2px;
  background: linear-gradient(#fdfdfd, #dcdcdc);
  color: #000;
  font: inherit;
}
.combo::before {
  content: "";
  position: absolute;
  right: 16px;
  top: 1px;
  bottom: 1px;
  border-left: 1px solid #b8b8b8;
}
.combo::after {
  content: "";
  position: absolute;
  right: 4px;
  top: 8px;
  border: 4px solid transparent;
  border-top: 5px solid #000;
  border-bottom: 0;
}
.fields input[type=range] {
  appearance: none;
  width: 84px;
  height: 16px;
  margin: 0 -1px;
  background: none;
}
.fields input[type=range]::-webkit-slider-runnable-track {
  height: 4px;
  border: 1px solid #a8a8a8;
  border-radius: 2px;
  background: #ddd;
}
.fields input[type=range]::-webkit-slider-thumb {
  appearance: none;
  width: 10px;
  height: 14px;
  margin-top: -6px;
  border: 1px solid #8c8c8c;
  border-radius: 2px 2px 5px 5px;
  background: #f4f4f4;
}
.num {
  width: 74px;
  height: 21px;
  padding: 0 4px;
  border: 1px solid #b0b0b0;
  border-radius: 2px;
  background: #fff;
  font: inherit;
}
.check { display: flex; align-items: center; gap: 4px; }
.check input {
  appearance: none;
  width: 13px;
  height: 13px;
  margin: 0;
  border: 1px solid #c0c0c0;
  background: #eee;
  font: 12px/11px "DejaVu Sans", sans-serif;
  text-align: center;
}
.check input:checked::before { content: "✖"; }
.group + .last { margin-right: 2px; }
.fields + .grip { margin-left: 16px; margin-right: -2px; }
.more { align-self: flex-start; margin: 4px 2px 0 auto; font-size: 15px; }

/* work area */
main { flex: 1; min-height: 0; display: flex; }

.strip {
  flex: none;
  width: 42px;
  border-right: 3px double #b4b4b4;
  padding-top: 7px;
}
.hgrip {
  display: block;
  width: 30px;
  height: 6px;
  margin-left: 5px;
  background:
    radial-gradient(circle at 1px 1px, #c2c2c2 1px, transparent 1px) 0 0 / 6px 8px,
    radial-gradient(circle at 1px 1px, #c2c2c2 1px, transparent 1px) 3px 3px / 6px 8px;
}
.hgrip + .stack { margin-top: -1px; }
.hgrip + .tail { margin-top: 1px; }
.stack + .hgrip { margin-top: 8px; }
.stack button { width: 40px; height: 34px; }
.stack svg { width: 24px; height: 24px; }
.qmark { font: 700 17px "DejaVu Sans", sans-serif; fill: #0a0a90; }

.side {
  flex: none;
  width: 257px;
  display: flex;
  flex-direction: column;
  border-right: 1px solid #b4b4b4;
}
.tabs { flex: none; height: 19px; display: flex; align-items: flex-end; padding-top: 1px; }
.tabs > button {
  height: 15px;
  padding: 0 7px;
  border: 1px solid #b4b4b4;
  border-bottom: 0;
  border-radius: 3px 3px 0 0;
  background: linear-gradient(#fafafa, #d8d8d8);
  font-size: 11px;
  white-space: nowrap;
}
.tabs > .sel { height: 18px; background: #efefef; border: 0; padding: 0 10px; }
.tabs > .cut { width: 60px; padding-left: 10px; justify-content: flex-start; overflow: hidden; border-right: 0; }
.arrows { display: flex; align-self: flex-start; gap: 2px; }
.arrows button { width: 14px; height: 18px; border: 1px solid #aaa; border-radius: 2px; background: linear-gradient(#fff, #ddd); }
.arrows svg { width: 6px; height: 10px; }
.tabs > .help { border: 0; background: none; padding: 0; margin: 0 auto 3px 6px; height: 14px; }
.help svg { width: 14px; height: 14px; }
.q { font: 700 11px "Liberation Sans", sans-serif; fill: #fff; }

.tree {
  flex: 1;
  min-height: 0;
  margin-right: 1px;
  padding: 2px 6px;
  border: 1px solid #b4b4b4;
  background: #fff;
}
.tree ul { margin: 0; padding: 0; list-style: none; }
.tree ul ul { padding-left: 20px; }
.row { display: flex; align-items: center; height: 17px; }
.row .i16 { margin: 0 2px; }
.tree ul ul .i16 { margin: 0 5px 0 3px; }
.tog { position: relative; width: 9px; height: 9px; border: 1px solid #9a9a9a; }
.tog::before { content: ""; position: absolute; left: 1px; right: 1px; top: 3px; height: 1px; background: #555; }
.tog:not(.minus)::after { content: ""; position: absolute; top: 1px; bottom: 1px; left: 3px; width: 1px; background: #555; }
.dots { width: 5px; margin-left: 1px; border-top: 1px dotted #999; }
.elbow { width: 11px; height: 17px; margin: -17px 0 0 4px; border: 1px dotted #999; border-width: 0 0 1px 1px; }

.split { flex: none; height: 7px; display: flex; align-items: center; justify-content: center; }
.split span {
  width: 84px;
  height: 3px;
  background: radial-gradient(circle at 1px 1px, #b8b8b8 1px, transparent 1px) 0 0 / 5px 3px;
}
.lower { flex: none; height: 107px; margin-right: 1px; border: 1px solid #b4b4b4; border-bottom: 0; border-radius: 3px 3px 0 0; }

.create { flex: none; width: 67px; display: flex; }
.palette { width: 61px; padding-left: 1px; }
.create h2 { width: 54px; margin: 3px 3px 0; text-align: center; font-weight: 400; line-height: 14px; }
.pair { display: grid; grid-template-columns: 1fr 1fr; padding-top: 2px; }
.pair button { height: 29px; }
.pair svg { width: 20px; height: 20px; }
.pair.arrowsrow { padding: 0; border-bottom: 1px solid #b4b4b4; }
.tinyq { font: 700 9px "DejaVu Sans", sans-serif; fill: #555; stroke: none; }
.vgrip {
  width: 3px;
  height: 304px;
  margin: 305px 0 0 1px;
  background: radial-gradient(circle at 1px 1px, #b8b8b8 1px, transparent 1px) 0 0 / 3px 5px;
}

/* 3D panes */
.views {
  position: relative;
  flex: 1;
  min-width: 0;
  display: grid;
  grid-template-columns: 776fr 773fr;
  grid-template-rows: 457fr 445fr;
  gap: 2px;
  margin-top: 1px;
  background: #e8e8f0;
}
.view { min-width: 0; min-height: 0; background: linear-gradient(#d6d6d6, #fff); overflow: hidden; border: 0 solid #6c7088; }
.left { border-right-width: 1px; }
.top { border-bottom-width: 1px; }
.right { border-left: 1px solid #3c4058; }
.bottom { border-top: 1px solid #3c4058; }
.active svg { border: 1px solid #f00; }
.view svg { width: 100%; height: 100%; }
.view text { font: 11px "Liberation Mono", monospace; }
.bound, .yel { fill: none; stroke: #808080; shape-rendering: crispEdges; }
.yel { stroke: #ff0; }
.r { fill: #c00000; stroke: #500; stroke-width: .5; }
.g { fill: #00b400; stroke: #040; stroke-width: .5; }
.b { fill: #0000c0; stroke: #004; stroke-width: .5; }
.r2 { fill: #700000; }
.g2 { fill: #007400; }
.b2 { fill: #000080; }
.rt { fill: #c00000; }
.gt { fill: #00c800; }
.bt { fill: #0000c0; }
.ft { fill: #c8c8c8; }

.gauge {
  position: absolute;
  right: 0;
  top: 765px;
  width: 7px;
  height: 60px;
  padding: 7px 0 7px 4px;
  border-radius: 4px 0 0 4px;
  background: #4a5064;
}
.gauge span {
  display: block;
  height: 100%;
  background:
    repeating-linear-gradient(transparent 0 1px, #4a5064 1px 2px),
    linear-gradient(#222838 60%, #b8e890 60%, #70e0d0);
}
.mark {
  position: absolute;
  right: 7px;
  bottom: 8px;
  margin: 0;
  color: #fff;
  font: 16px/20px "Liberation Sans", sans-serif;
  text-shadow: 1px 1px 1px #ccc;
}
```
